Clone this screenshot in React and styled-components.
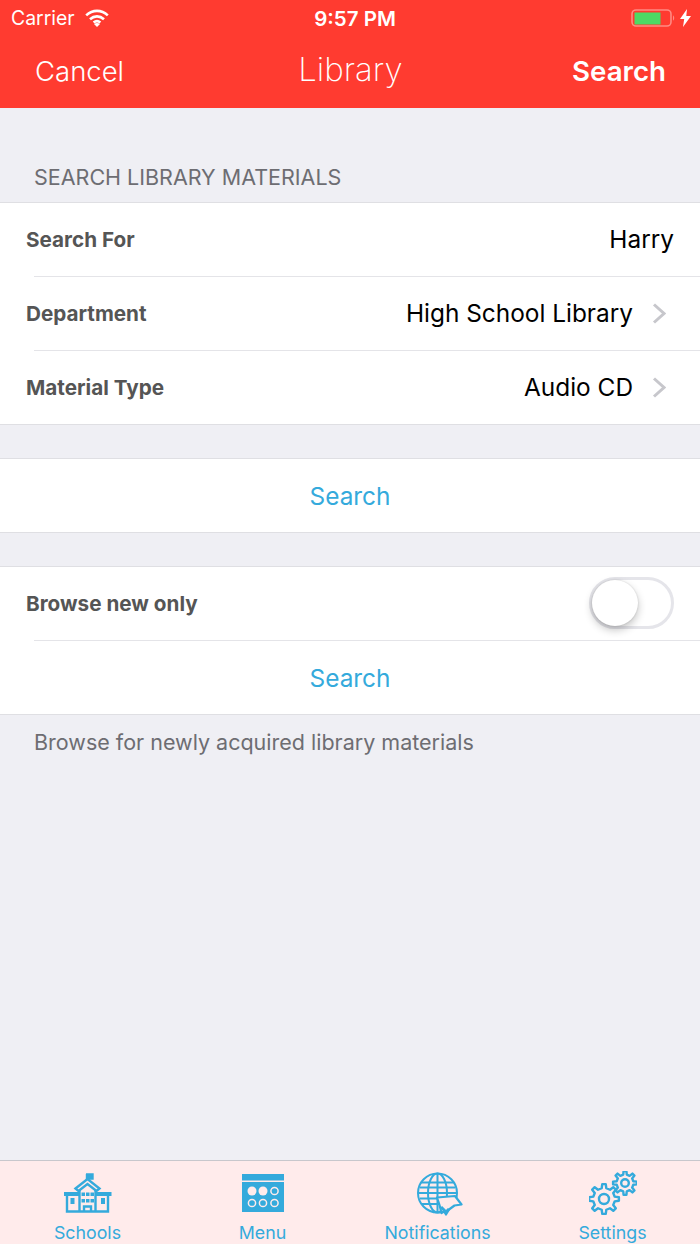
import React from "react";
import styled, { createGlobalStyle } from "styled-components";

const GlobalStyle = createGlobalStyle`
  html, body {
    margin: 0;
    padding: 0;
    background: #efeff4;
  }
  * {
    box-sizing: border-box;
  }
  body {
    font-family: Inter, "Liberation Sans", sans-serif;
  }
`;

const Page = styled.div`
  width: 700px;
  height: 1244px;
  display: flex;
  flex-direction: column;
  overflow: hidden;
  background: #efeff4;
`;

const Header = styled.header`
  height: 108px;
  flex: none;
  background: #ff3b30;
  color: #fff;
`;

const StatusBar = styled.div`
  height: 36px;
  padding: 0 9px 0 11px;
  display: grid;
  grid-template-columns: 1fr auto 1fr;
  align-items: center;
`;

const StatusLeft = styled.div`
  display: flex;
  align-items: center;
  gap: 10px;
  font-size: 19.4px;
`;

const Time = styled.div`
  font-size: 20.5px;
  font-weight: 600;
  padding-left: 8px;
`;

const StatusRight = styled.div`
  display: flex;
  justify-content: flex-end;
  align-items: center;
  gap: 5px;
`;

const NavBar = styled.div`
  height: 70px;
  padding: 0 34px 0 35px;
  display: grid;
  grid-template-columns: 1fr auto 1fr;
  align-items: center;
`;

const NavCancel = styled.div`
  font-size: 27.5px;
  font-weight: 300;
`;

const NavTitle = styled.div`
  font-size: 33px;
  font-weight: 200;
  margin-top: -4px;
`;

const NavSearch = styled.div`
  font-size: 27.7px;
  font-weight: 600;
  text-align: right;
`;

const Content = styled.main`
  flex: 1;
`;

const SectionTitle = styled.div`
  padding: 57px 34px 13px;
  font-size: 21.5px;
  line-height: 24px;
  color: #6d6d72;
`;

const Group = styled.section`
  background: #fff;
  border-bottom: 1px solid #dfdfe3;
  margin-bottom: ${(p) => p.$gap || 0}px;
`;

const Row = styled.div`
  height: 74px;
  padding-left: 26px;
  padding-right: ${(p) => (p.$chevron ? 34 : 26)}px;
  display: flex;
  align-items: center;
  justify-content: space-between;
  position: relative;

  &::before {
    content: "";
    position: absolute;
    top: 0;
    left: 34px;
    right: 0;
    height: 1px;
    background: #e4e4e8;
  }

  &:first-child::before {
    left: 0;
    background: #dfdfe3;
  }
`;

const Label = styled.div`
  font-size: 20.7px;
  font-weight: 700;
  color: #555;
`;

const Value = styled.div`
  display: flex;
  align-items: center;
  gap: 19px;
  font-size: 24.4px;
  color: #000;
`;

const ActionRow = styled(Row)`
  justify-content: center;
  padding: 2px 0 0;
  font-size: 24.4px;
  color: #34aadc;
`;

const Switch = styled.div`
  width: 85px;
  height: 52px;
  border: 3px solid #e5e5ea;
  border-radius: 26px;
  position: relative;
`;

const Knob = styled.div`
  position: absolute;
  left: 0;
  top: 0;
  width: 46px;
  height: 46px;
  border-radius: 50%;
  background: #fff;
  box-shadow: 0 4px 8px rgba(0, 0, 0, 0.24), 0 0 2px rgba(0, 0, 0, 0.16);
`;

const Note = styled.div`
  padding: 14px 34px 0;
  font-size: 21.5px;
  line-height: 26px;
  color: #6d6d72;
`;

const TabBar = styled.nav`
  height: 84px;
  flex: none;
  background: #ffebeb;
  border-top: 1px solid #c8c7cc;
  display: grid;
  grid-template-columns: repeat(4, 1fr);
`;

const Tab = styled.div`
  display: flex;
  flex-direction: column;
  align-items: center;
  color: #34aadc;
`;

const TabIcon = styled.div`
  height: 61px;
  display: flex;
  align-items: flex-start;
  padding-top: ${(p) => p.$top}px;
  padding-left: ${(p) => p.$left || 0}px;
`;

const TabLabel = styled.div`
  font-size: 17.8px;
  line-height: 21px;
`;

function Wifi() {
  return (
    <svg width="24" height="18" viewBox="0 0 24 18" fill="none" stroke="#fff" strokeWidth="2.6">
      <path d="M1.2 6.4C7.6 .4 16.4 .4 22.8 6.4" />
      <path d="M5 10.2C9.2 6.4 14.8 6.4 19 10.2" />
      <path d="M8.6 13.6C10.8 11.8 13.2 11.8 15.4 13.6" />
      <path d="M12 18l-3-3c1.8-1.3 4.2-1.3 6 0z" fill="#fff" stroke="none" />
    </svg>
  );
}

function Battery() {
  return (
    <svg width="44" height="18" viewBox="0 0 44 18">
      <rect x="1" y="1" width="39" height="16" rx="4" fill="none" stroke="#ff8a83" strokeWidth="1.6" />
      <rect x="3.5" y="3.5" width="26" height="12" fill="#4cd964" />
      <path d="M42 6.5c1.6.6 1.6 4.4 0 5z" fill="#ff8a83" />
    </svg>
  );
}

function Bolt() {
  return (
    <svg width="11" height="18" viewBox="0 0 11 18">
      <path d="M7 0L0 10h4.2L3 18l8-11H6.3z" fill="#fff" />
    </svg>
  );
}

function Chevron() {
  return (
    <svg width="14" height="21" viewBox="0 0 14 21" fill="none" stroke="#c7c7cc" strokeWidth="3">
      <path d="M2 1.5l10 9-10 9" />
    </svg>
  );
}

function SchoolIcon() {
  return (
    <svg width="48" height="40" viewBox="0 0 48 40">
      <g fill="none" stroke="#34aadc" strokeWidth="2.4">
        <path d="M23 7V1M22 1.5h6.5v4H23" fill="#34aadc" />
        <path d="M11.5 15.5L23.5 6l12 9.5-3 2.500-9-7-9 7z" />
        <path d="M15.5 17v22M31.500 17v22" />
        <path d="M3 23v15.5h41V23" />
        <path d="M20 39v-5.5h7V39" />
      </g>
      <rect x="0" y="19" width="15.5" height="4" fill="#34aadc" />
      <rect x="31.5" y="19" width="16" height="4" fill="#34aadc" />
      <g fill="#34aadc">
        <rect x="17.5" y="19.5" width="3.5" height="3.5" />
        <rect x="22" y="19.5" width="3.5" height="3.5" />
        <rect x="26.5" y="19.5" width="3.5" height="3.5" />
        <rect x="17.5" y="26" width="3.5" height="3.5" />
        <rect x="22" y="26" width="3.5" height="3.5" />
        <rect x="26.5" y="26" width="3.5" height="3.5" />
        <rect x="6.5" y="25" width="4" height="6" />
        <rect x="37" y="25" width="4" height="6" />
      </g>
    </svg>
  );
}

function MenuIcon() {
  return (
    <svg width="42" height="38" viewBox="0 0 42 38">
      <rect x="0" y="0" width="42" height="6.5" fill="#34aadc" />
      <rect x="0" y="8" width="42" height="30" fill="#34aadc" />
      <circle cx="10" cy="17" r="4.5" fill="#ffebeb" />
      <circle cx="21" cy="17" r="4.5" fill="#ffebeb" />
      <circle cx="32.5" cy="17" r="3.6" fill="none" stroke="#ffebeb" strokeWidth="1.5" />
      <circle cx="10" cy="29" r="3.6" fill="none" stroke="#ffebeb" strokeWidth="1.5" />
      <circle cx="21" cy="29" r="3.6" fill="none" stroke="#ffebeb" strokeWidth="1.5" />
      <circle cx="32.5" cy="29" r="3.6" fill="none" stroke="#ffebeb" strokeWidth="1.5" />
    </svg>
  );
}

function GlobeIcon() {
  return (
    <svg width="46" height="46" viewBox="0 0 46 46">
      <g fill="none" stroke="#34aadc" strokeWidth="2">
        <circle cx="20.5" cy="21" r="19.5" />
        <ellipse cx="20.5" cy="21" rx="9.5" ry="19.5" />
        <path d="M20.5 1.5v39M1 21h39M4 10.5h33M3 15.5h35M3 26.5h35M5 32h31" />
      </g>
      <path
        d="M20 25.5l18-1.5 6.500 8.5-7 1-5.5 4-3 5-2-3-2.5 1.5-2-8z"
        fill="#ffebeb"
        stroke="#34aadc"
        strokeWidth="2.2"
        strokeLinejoin="round"
      />
      <path d="M24 35l5 5 3-3" fill="none" stroke="#34aadc" strokeWidth="3" />
    </svg>
  );
}

function gearPath(cx, cy, outer, inner, teeth) {
  const step = (Math.PI * 2) / teeth;
  const points = [];
  for (let i = 0; i < teeth; i++) {
    const a = i * step;
    const w = step * 0.2;
    points.push([a - w * 1.35, inner], [a - w * 0.75, outer], [a + w * 0.75, outer], [a + w * 1.35, inner]);
  }
  const d = points.map(([a, r], i) => {
    const x = (cx + Math.cos(a) * r).toFixed(2);
    const y = (cy + Math.sin(a) * r).toFixed(2);
    return `${i === 0 ? "M" : "L"}${x} ${y}`;
  });
  return d.join(" ") + " Z";
}

function GearsIcon() {
  return (
    <svg width="48" height="44" viewBox="0 0 48 44">
      <g fill="none" stroke="#34aadc" strokeWidth="2.4" strokeLinejoin="round">
        <path d={gearPath(15, 28, 15, 11, 8)} />
        <circle cx="15" cy="28" r="5" />
        <path d={gearPath(36, 12, 12, 8.5, 8)} fill="#ffebeb" />
        <circle cx="36" cy="12" r="3.8" />
      </g>
    </svg>
  );
}

export default function App() {
  return (
    <Page>
      <GlobalStyle />
      <Header>
        <StatusBar>
          <StatusLeft>
            Carrier
            <Wifi />
          </StatusLeft>
          <Time>9:57 PM</Time>
          <StatusRight>
            <Battery />
            <Bolt />
          </StatusRight>
        </StatusBar>
        <NavBar>
          <NavCancel>Cancel</NavCancel>
          <NavTitle>Library</NavTitle>
          <NavSearch>Search</NavSearch>
        </NavBar>
      </Header>
      <Content>
        <SectionTitle>SEARCH LIBRARY MATERIALS</SectionTitle>
        <Group $gap={33}>
          <Row>
            <Label>Search For</Label>
            <Value>Harry</Value>
          </Row>
          <Row $chevron>
            <Label>Department</Label>
            <Value>
              High School Library
              <Chevron />
            </Value>
          </Row>
          <Row $chevron>
            <Label>Material Type</Label>
            <Value>
              Audio CD
              <Chevron />
            </Value>
          </Row>
        </Group>
        <Group $gap={33}>
          <ActionRow>Search</ActionRow>
        </Group>
        <Group>
          <Row>
            <Label>Browse new only</Label>
            <Switch>
              <Knob />
            </Switch>
          </Row>
          <ActionRow>Search</ActionRow>
        </Group>
        <Note>Browse for newly acquired library materials</Note>
      </Content>
      <TabBar>
        <Tab>
          <TabIcon $top={12}>
            <SchoolIcon />
          </TabIcon>
          <TabLabel>Schools</TabLabel>
        </Tab>
        <Tab>
          <TabIcon $top={13}>
            <MenuIcon />
          </TabIcon>
          <TabLabel>Menu</TabLabel>
        </Tab>
        <Tab>
          <TabIcon $top={11} $left={5}>
            <GlobeIcon />
          </TabIcon>
          <TabLabel>Notifications</TabLabel>
        </Tab>
        <Tab>
          <TabIcon $top={10}>
            <GearsIcon />
          </TabIcon>
          <TabLabel>Settings</TabLabel>
        </Tab>
      </TabBar>
    </Page>
  );
}
